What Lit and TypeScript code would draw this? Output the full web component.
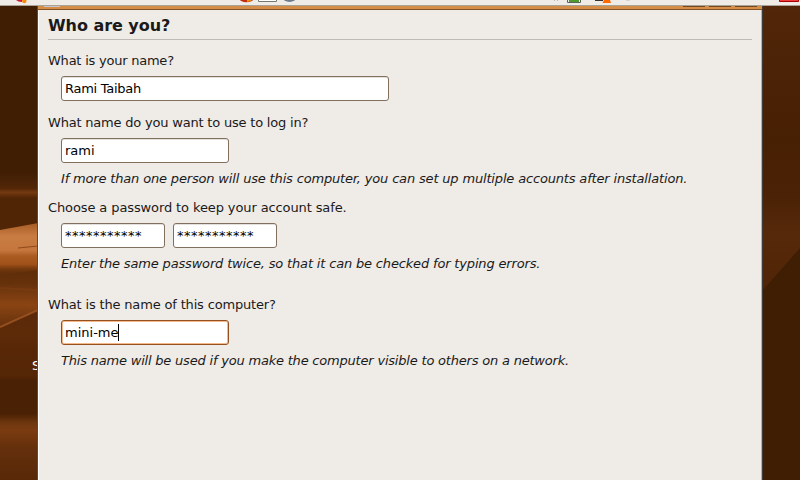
import { LitElement, html, css, svg } from "lit";
import { customElement } from "lit/decorators.js";

@customElement("desktop-panel")
class DesktopPanel extends LitElement {
  static styles = css`
    :host { display: block; height: 6px; overflow: hidden; background: #efebe7; }
    svg { display: block; }
  `;
  render() {
    return html`<svg width="800" height="6" viewBox="0 0 800 6">
      <rect y="5" width="800" height="1" fill="#a9a297" />
      <path d="M16 0h6v2q-4-.2-6-2z" fill="#c81c38" />
      <circle cx="24.300" cy="1" r="2.200" fill="#f78d0c" />
      <ellipse cx="246.500" cy="-2" rx="7.500" ry="4.200" fill="#c52c0c" />
      <path d="M247 0h5q-2 2-5 2z" fill="#e8940c" />
      <path d="M258.500 0v1.500h18V0" fill="#fff" stroke="#75796f" />
      <ellipse cx="289.500" cy="-3" rx="7" ry="5" fill="#6f7c90" />
      <path d="M554 0h1v1h-1zM557 0h1v1h-1z" fill="#bbb" />
      <path d="M567.500 0v2.500h13V0" fill="#efebe7" stroke="#5c645a" />
      <path d="M569 0h10v2h-10z" fill="#4f9a2c" />
      <path d="M595 0h8v1h-8z" fill="#37322f" />
      <path d="M604 0h6l1 3h-8.500z" fill="#ff6a00" />
      <path d="M626 0h4v1h-4z" fill="#d8d3cf" />
      <path d="M779.500 0v1.500h19V0" fill="#ee3b3b" stroke="#a80000" />
    </svg>`;
  }
}

@customElement("wallpaper-strip")
class WallpaperStrip extends LitElement {
  static properties = { side: { type: String } };
  declare side: string;
  static styles = css`
    :host { display: block; overflow: hidden; }
    svg { display: block; }
    .label { font: 13px "DejaVu Sans", sans-serif; fill: #fff; }
  `;
  left() {
    return svg`
      <defs>
        <linearGradient id="l" gradientUnits="userSpaceOnUse" x1="0" y1="0" x2="0" y2="474">
          <stop offset="0" stop-color="#3f1e04" />
          <stop offset=".35" stop-color="#3f1e04" />
          <stop offset=".385" stop-color="#532708" />
          <stop offset=".393" stop-color="#743a10" />
          <stop offset=".405" stop-color="#502506" />
          <stop offset=".46" stop-color="#502506" />
          <stop offset=".55" stop-color="#5c2c08" />
          <stop offset=".585" stop-color="#65310b" />
          <stop offset=".63" stop-color="#8a4413" />
          <stop offset=".67" stop-color="#6b340d" />
          <stop offset=".72" stop-color="#572706" />
          <stop offset=".78" stop-color="#552606" />
          <stop offset=".79" stop-color="#4a2104" />
          <stop offset=".86" stop-color="#4a2104" />
          <stop offset=".88" stop-color="#6f370f" />
          <stop offset=".895" stop-color="#7a3c11" />
          <stop offset=".93" stop-color="#65300c" />
          <stop offset="1" stop-color="#582807" />
        </linearGradient>
        <linearGradient id="b" x1="0" y1="0" x2="0" y2="1">
          <stop offset="0" stop-color="#a65c26" />
          <stop offset=".25" stop-color="#c97c42" />
          <stop offset=".52" stop-color="#c4763c" />
          <stop offset=".62" stop-color="#aa5c22" />
          <stop offset=".78" stop-color="#a05119" />
          <stop offset="1" stop-color="#5c2c08" stop-opacity="0" />
        </linearGradient>
        <linearGradient id="d" x1="0" y1="0" x2="0" y2="1">
          <stop offset=".3" stop-color="#5c2a08" />
          <stop offset="1" stop-color="#572706" stop-opacity="0" />
        </linearGradient>
      </defs>
      <rect width="38" height="474" fill="url(#l)" />
      <path d="M0 224L38 217V264L0 270z" fill="url(#b)" />
      <path d="M18 242L38 240" stroke="#8f4a1a" />
      <path d="M0 282L38 284" stroke="#7e3f13" stroke-width="2" opacity=".6" />
      <path d="M0 321L38 304V350H0z" fill="url(#d)" />
      <path d="M0 321L38 304" stroke="#94501e" stroke-width="2" />
      <text class="label" x="32" y="364">S</text>`;
  }
  right() {
    return svg`
      <defs>
        <linearGradient id="r" x1="0" y1="0" x2="0" y2="1">
          <stop offset="0" stop-color="#512609" />
          <stop offset=".28" stop-color="#471f03" />
          <stop offset=".4" stop-color="#4b2205" />
          <stop offset=".48" stop-color="#57290b" />
          <stop offset=".6" stop-color="#502406" />
        </linearGradient>
      </defs>
      <rect width="37" height="474" fill="url(#r)" />
      <path d="M0 284L37 242V474H0z" fill="#3f1e04" />`;
  }
  render() {
    return html`<svg width="38" height="474">${this.side === "left" ? this.left() : this.right()}</svg>`;
  }
}

@customElement("text-entry")
class TextEntry extends LitElement {
  static properties = { value: { type: String }, focused: { type: Boolean } };
  declare value: string;
  declare focused: boolean;
  static styles = css`
    :host { display: block; height: 25px; }
    .box {
      box-sizing: border-box; height: 25px; display: flex; align-items: center;
      padding: 0 3px; border: 1px solid #82705f; border-radius: 3px;
      background: #fff; color: #000; box-shadow: inset 0 1px #e4e0dc; white-space: pre;
    }
    .focused { border-color: #96501f; box-shadow: inset 0 0 0 1px #f3b98a; }
    .caret { width: 1px; height: 17px; background: #000; }
  `;
  render() {
    return html`<div class="box ${this.focused ? "focused" : ""}">
      <span>${this.value}</span>${this.focused ? html`<i class="caret"></i>` : ""}
    </div>`;
  }
}

@customElement("app-root")
class AppRoot extends LitElement {
  static styles = css`
    :host {
      display: flex; flex-direction: column; width: 800px; height: 480px; overflow: hidden;
      font: 13px/16px "DejaVu Sans", sans-serif; color: #1a1a1a; background: #3f1e04;
    }
    .desk { display: grid; grid-template-columns: 37px 726px 37px; height: 474px; }
    .window {
      box-sizing: border-box; border-left: 1px solid #5a4a40; border-right: 1px solid #403a38;
      background: #efebe7; box-shadow: inset 1px 0 #fff, inset -1px 0 #b9b1a8;
      white-space: nowrap;
    }
    .title { height: 4px; }
    .title svg { display: block; }
    .page { padding: 6px 10px 0 10px; }
    h1 { margin: 0 0 5px; height: 19px; font: bold 16px/20px "DejaVu Sans", sans-serif; letter-spacing: -0.05px; padding-bottom: 4px; border-bottom: 1px solid #bfbab5; }
    .group { display: flex; flex-direction: column; align-items: flex-start; padding-top: 8px; }
    .login { padding-top: 14px; }
    .password { padding-top: 13px; }
    .computer { padding-top: 25px; }
    .fields { display: flex; gap: 8px; padding: 7px 0 0 13px; }
    .note { font-style: italic; padding: 8px 0 0 13px; }
    .wide { width: 328px; letter-spacing: -0.27px; }
    .mid { width: 168px; }
    .small { width: 104px; letter-spacing: 0.5px; }
    .t11 { letter-spacing: -0.11px; }
    .t16 { letter-spacing: -0.165px; }
    .t20 { letter-spacing: -0.2px; }
    .t23 { letter-spacing: -0.23px; }
  `;
  render() {
    return html`
      <desktop-panel></desktop-panel>
      <div class="desk">
        <wallpaper-strip side="left"></wallpaper-strip>
        <main class="window">
          <div class="title"><svg width="724" height="4">
            <rect width="724" height="3" fill="#d58e47" />
            <rect y="3" width="724" height="1" fill="#865329" />
            <path d="M6 0h16v1h-16z" fill="#c8c4cb" />
            <path d="M645 .5h22M671 .5h22M697 .5h22" stroke="#74491f" />
          </svg></div>
          <div class="page">
            <h1><span>Who are you?</span></h1>
            <section class="group">
              <span class="t23">What is your name?</span>
              <div class="fields"><text-entry class="wide" value="Rami Taibah"></text-entry></div>
            </section>
            <section class="group login">
              <span class="t20">What name do you want to use to log in?</span>
              <div class="fields"><text-entry class="mid" value="rami"></text-entry></div>
              <span class="note t16">If more than one person will use this computer, you can set up multiple accounts after installation.</span>
            </section>
            <section class="group password">
              <span class="t11">Choose a password to keep your account safe.</span>
              <div class="fields">
                <text-entry class="small" value="***********"></text-entry>
                <text-entry class="small" value="***********"></text-entry>
              </div>
              <span class="note t16">Enter the same password twice, so that it can be checked for typing errors.</span>
            </section>
            <section class="group computer">
              <span class="t16">What is the name of this computer?</span>
              <div class="fields"><text-entry class="mid" value="mini-me" focused></text-entry></div>
              <span class="note t20">This name will be used if you make the computer visible to others on a network.</span>
            </section>
          </div>
        </main>
        <wallpaper-strip side="right"></wallpaper-strip>
      </div>`;
  }
}
